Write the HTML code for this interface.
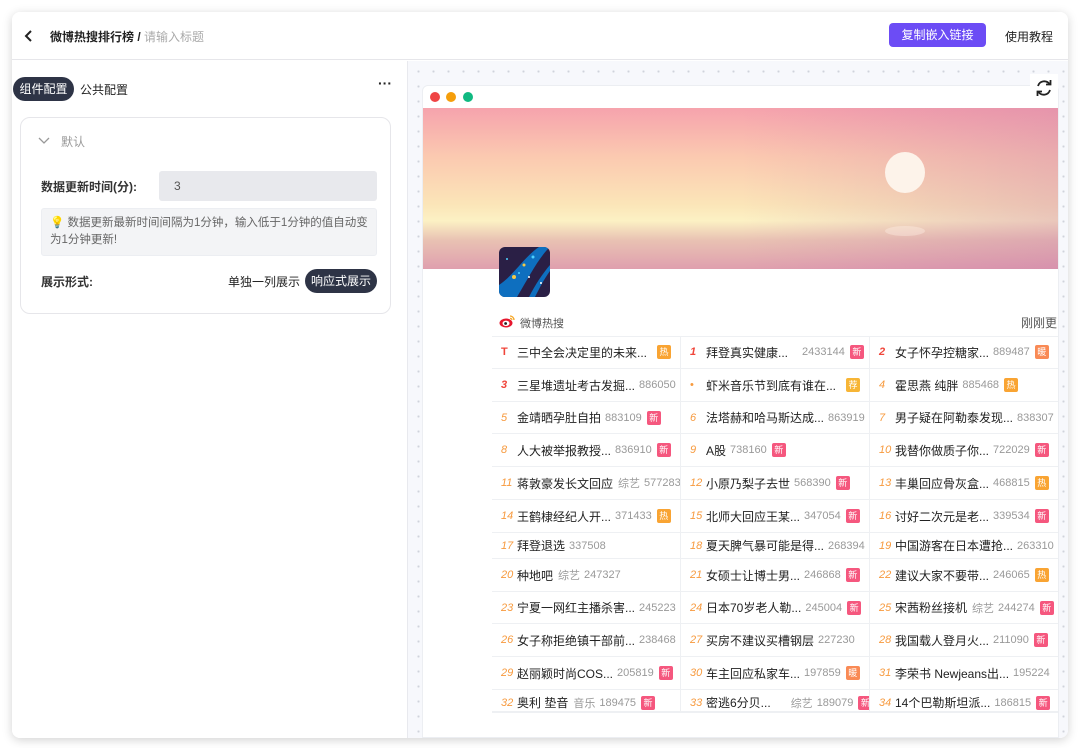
<!DOCTYPE html>
<html><head><meta charset="utf-8">
<style>
*{box-sizing:border-box;margin:0;padding:0}
body{width:1080px;height:748px;background:#fff;font-family:"Liberation Sans","Noto Sans CJK SC",sans-serif;position:relative;overflow:hidden;color:#222}
.card{position:absolute;left:12px;top:12px;width:1056px;height:726px;background:#fff;border-radius:8px;box-shadow:0 2px 10px rgba(0,0,0,.18);overflow:hidden}
.hdr{position:absolute;left:0;top:0;width:1056px;height:48px;border-bottom:1px solid #e6e6ea;background:#fff}
.abs{position:absolute}
.left{position:absolute;left:0;top:49px;width:395px;height:677px;background:#fff}
.right{position:absolute;left:395px;top:49px;width:661px;height:677px;background-color:#f7f8fc;background-image:radial-gradient(#d0d3dc 1px,transparent 1.2px);background-size:15px 15px;background-position:3px 3px;border-left:1px solid #e8e9ee}
.win{position:absolute;left:14px;top:24px;width:637px;height:653px;background:#fff;border-radius:6px 6px 0 0;border:1px solid #eceef2;overflow:hidden}
.banner{position:absolute;left:0;top:22px;width:637px;height:161px;background:linear-gradient(180deg,#f6a3ad 0%,#fbc9b0 30%,#fbe5b8 60%,#fcf1c4 70%,#e9c2b3 82%,#df9fae 100%)}
.banner:after{content:"";position:absolute;inset:0;background:linear-gradient(90deg,rgba(255,255,255,0) 50%,rgba(200,120,170,.35) 100%)}
.row{position:absolute;left:69px;width:568px;display:flex;border-bottom:1px solid #eef0f3}
.c{width:189px;display:flex;align-items:center;padding-left:9px;font-size:12px;white-space:nowrap;overflow:hidden;border-right:1px solid #eef0f3}
.n{width:16px;color:#f79a3e;font-style:italic;font-size:11px;flex:none}
.n.r{color:#f0453a;font-weight:bold}
.t{color:#222}
.k{color:#999;font-size:11px;margin-left:5px}
.g{color:#999;font-size:11px;margin-left:4px}
.b{display:inline-block;width:14px;height:14px;font-size:9px;line-height:14px;text-align:center;color:#fff;border-radius:2px;margin-left:5px;flex:none}
.hot{background:#f9a433}.new{background:#f5577e}.nuan{background:#f98a55}.jian{background:#f7b536}
</style></head><body>
<div class="card">
 <div class="hdr">
  <svg class="abs" style="left:12px;top:17px" width="10" height="14" viewBox="0 0 10 14"><path d="M7 2 L2 7 L7 12" stroke="#222" stroke-width="2" fill="none"/></svg>
  <div class="abs" style="left:38px;top:16px;font-size:12px;font-weight:bold;color:#222">微博热搜排行榜 / <span style="font-weight:normal;color:#aaa">请输入标题</span></div>
  <div class="abs" style="left:877px;top:11px;width:97px;height:24px;background:#6c4cf5;border-radius:4px;color:#fff;font-size:12px;line-height:24px;text-align:center">复制嵌入链接</div>
  <div class="abs" style="left:993px;top:16px;font-size:12px;color:#222">使用教程</div>
 </div>
 <div class="left">
  <div class="abs" style="left:1px;top:16px;width:61px;height:24px;background:#2e3446;border-radius:12px;color:#fff;font-size:12px;line-height:24px;text-align:center">组件配置</div>
  <div class="abs" style="left:68px;top:20px;font-size:12px">公共配置</div>
  <div class="abs" style="left:366px;top:14px;font-size:14px;font-weight:bold">···</div>
  <div class="abs" style="left:8px;top:56px;width:371px;height:197px;border:1px solid #e6e6ea;border-radius:10px">
   <svg class="abs" style="left:17px;top:19px" width="12" height="8" viewBox="0 0 12 8"><path d="M1 1 L6 6 L11 1" stroke="#999" stroke-width="1.3" fill="none"/></svg>
   <div class="abs" style="left:40px;top:15px;font-size:12px;color:#999">默认</div>
   <div class="abs" style="left:20px;top:60px;font-size:12px;font-weight:bold;color:#333">数据更新时间(分):</div>
   <div class="abs" style="left:138px;top:53px;width:218px;height:30px;background:#e8e9ed;border-radius:3px;font-size:12px;color:#555;line-height:30px;padding-left:15px">3</div>
   <div class="abs" style="left:20px;top:90px;width:336px;height:48px;background:#f3f4f6;border:1px solid #eceef2;border-radius:3px;font-size:11.5px;color:#666;padding:6px 8px;line-height:17px"><span style="color:#f6b400">💡</span> 数据更新最新时间间隔为1分钟，输入低于1分钟的值自动变为1分钟更新!</div>
   <div class="abs" style="left:20px;top:155px;font-size:12px;font-weight:bold;color:#333">展示形式:</div>
   <div class="abs" style="left:207px;top:155px;font-size:12px;color:#222">单独一列展示</div>
   <div class="abs" style="left:284px;top:151px;width:72px;height:24px;background:#2e3446;border-radius:12px;color:#fff;font-size:12px;line-height:24px;text-align:center">响应式展示</div>
  </div>
 </div>
 <div class="right">
  <div class="abs" style="left:622px;top:13px;width:28px;height:28px;background:#fff;z-index:3">
   <svg width="28" height="28" viewBox="0 0 28 28"><path d="M8 12 A6.5 6.5 0 0 1 19.5 10 M20 16 A6.5 6.5 0 0 1 8.5 18" stroke="#222" stroke-width="1.8" fill="none"/><path d="M20.5 6 V10.5 H16" stroke="#222" stroke-width="1.8" fill="none"/><path d="M7.5 22 V17.5 H12" stroke="#222" stroke-width="1.8" fill="none"/></svg>
  </div>
  <div class="win">
   <div class="abs" style="left:7px;top:6px;width:10px;height:10px;border-radius:50%;background:#ef4444"></div>
   <div class="abs" style="left:23px;top:6px;width:10px;height:10px;border-radius:50%;background:#f59e0b"></div>
   <div class="abs" style="left:40px;top:6px;width:10px;height:10px;border-radius:50%;background:#10b981"></div>
   <div class="banner"><div class="abs" style="left:462px;top:44px;width:40px;height:41px;border-radius:50%;background:#fdf3ea;z-index:2"></div><div class="abs" style="left:462px;top:118px;width:40px;height:10px;border-radius:50%;background:rgba(255,240,230,.4);z-index:2"></div></div>
   <div class="abs" style="left:76px;top:161px;width:51px;height:50px;border-radius:6px;background:#2a1f45;overflow:hidden">
    <svg width="51" height="50" viewBox="0 0 51 50"><path d="M0 38 C15 28 25 10 40 0 L51 0 C40 10 30 30 18 50 L0 50Z" fill="#0e6fbf"/><path d="M30 50 C36 38 44 26 51 18 L51 24 C45 32 40 42 36 50Z" fill="#0e6fbf"/><circle cx="15" cy="30" r="2" fill="#f6c945"/><circle cx="25" cy="18" r="1.5" fill="#f6c945"/><circle cx="34" cy="10" r="1.5" fill="#4fd1ff"/><circle cx="20" cy="26" r="1" fill="#4fd1ff"/><circle cx="30" cy="30" r="1" fill="#fff"/><circle cx="42" cy="36" r="1" fill="#fff"/><circle cx="8" cy="12" r="1" fill="#4fd1ff"/></svg>
   </div>
   <svg class="abs" style="left:76px;top:228px" width="16" height="14" viewBox="0 0 16 14"><ellipse cx="7" cy="9" rx="6.5" ry="4.5" fill="#e6162d"/><ellipse cx="7" cy="9.3" rx="3.5" ry="2.7" fill="#fff"/><circle cx="6.6" cy="9.5" r="1.4" fill="#222"/><path d="M11 2 A4 4 0 0 1 15 6" stroke="#f5a623" stroke-width="1.3" fill="none"/><path d="M11 4.3 A2 2 0 0 1 13 6" stroke="#f5a623" stroke-width="1.1" fill="none"/></svg>
   <div class="abs" style="left:97px;top:229px;font-size:11px;color:#555">微博热搜</div>
   <div class="abs" style="left:598px;top:228px;font-size:12px;color:#555">刚刚更</div>
   <div class="abs" style="left:69px;top:250px;width:568px;height:377px;border-top:1px solid #eef0f3"></div>

   <div class="row" style="top:250px;height:33px"><div class="c"><span class="n r" style="font-style:normal">T</span><span class="t">三中全会决定里的未来...</span><span class="b hot" style="margin-left:10px">热</span></div><div class="c"><span class="n r">1</span><span class="t">拜登真实健康...</span><span class="g" style="margin-left:14px">2433144</span><span class="b new">新</span></div><div class="c"><span class="n r">2</span><span class="t">女子怀孕控糖家...</span><span class="g">889487</span><span class="b nuan">暖</span></div></div>
   <div class="row" style="top:283px;height:33px"><div class="c"><span class="n r">3</span><span class="t">三星堆遗址考古发掘...</span><span class="g">886050</span></div><div class="c"><span class="n" style="font-style:normal">•</span><span class="t">虾米音乐节到底有谁在...</span><span class="b jian" style="margin-left:10px">荐</span></div><div class="c"><span class="n">4</span><span class="t">霍思燕 纯胖</span><span class="g">885468</span><span class="b hot">热</span></div></div>
   <div class="row" style="top:316px;height:32px"><div class="c"><span class="n">5</span><span class="t">金靖晒孕肚自拍</span><span class="g">883109</span><span class="b new">新</span></div><div class="c"><span class="n">6</span><span class="t">法塔赫和哈马斯达成...</span><span class="g">863919</span></div><div class="c"><span class="n">7</span><span class="t">男子疑在阿勒泰发现...</span><span class="g">838307</span></div></div>
   <div class="row" style="top:348px;height:33px"><div class="c"><span class="n">8</span><span class="t">人大被举报教授...</span><span class="g">836910</span><span class="b new">新</span></div><div class="c"><span class="n">9</span><span class="t">A股</span><span class="g">738160</span><span class="b new">新</span></div><div class="c"><span class="n">10</span><span class="t">我替你做质子你...</span><span class="g">722029</span><span class="b new">新</span></div></div>
   <div class="row" style="top:381px;height:33px"><div class="c"><span class="n">11</span><span class="t">蒋敦豪发长文回应</span><span class="k">综艺</span><span class="g">577283</span></div><div class="c"><span class="n">12</span><span class="t">小原乃梨子去世</span><span class="g">568390</span><span class="b new">新</span></div><div class="c"><span class="n">13</span><span class="t">丰巢回应骨灰盒...</span><span class="g">468815</span><span class="b hot">热</span></div></div>
   <div class="row" style="top:414px;height:33px"><div class="c"><span class="n">14</span><span class="t">王鹤棣经纪人开...</span><span class="g">371433</span><span class="b hot">热</span></div><div class="c"><span class="n">15</span><span class="t">北师大回应王某...</span><span class="g">347054</span><span class="b new">新</span></div><div class="c"><span class="n">16</span><span class="t">讨好二次元是老...</span><span class="g">339534</span><span class="b new">新</span></div></div>
   <div class="row" style="top:447px;height:26px"><div class="c"><span class="n">17</span><span class="t">拜登退选</span><span class="g">337508</span></div><div class="c"><span class="n">18</span><span class="t">夏天脾气暴可能是得...</span><span class="g">268394</span></div><div class="c"><span class="n">19</span><span class="t">中国游客在日本遭抢...</span><span class="g">263310</span></div></div>
   <div class="row" style="top:473px;height:33px"><div class="c"><span class="n">20</span><span class="t">种地吧</span><span class="k">综艺</span><span class="g">247327</span></div><div class="c"><span class="n">21</span><span class="t">女硕士让博士男...</span><span class="g">246868</span><span class="b new">新</span></div><div class="c"><span class="n">22</span><span class="t">建议大家不要带...</span><span class="g">246065</span><span class="b hot">热</span></div></div>
   <div class="row" style="top:506px;height:32px"><div class="c"><span class="n">23</span><span class="t">宁夏一网红主播杀害...</span><span class="g">245223</span></div><div class="c"><span class="n">24</span><span class="t">日本70岁老人勒...</span><span class="g">245004</span><span class="b new">新</span></div><div class="c"><span class="n">25</span><span class="t">宋茜粉丝接机</span><span class="k">综艺</span><span class="g">244274</span><span class="b new">新</span></div></div>
   <div class="row" style="top:538px;height:33px"><div class="c"><span class="n">26</span><span class="t">女子称拒绝镇干部前...</span><span class="g">238468</span></div><div class="c"><span class="n">27</span><span class="t">买房不建议买槽钢层</span><span class="g">227230</span></div><div class="c"><span class="n">28</span><span class="t">我国载人登月火...</span><span class="g">211090</span><span class="b new">新</span></div></div>
   <div class="row" style="top:571px;height:33px"><div class="c"><span class="n">29</span><span class="t">赵丽颖时尚COS...</span><span class="g">205819</span><span class="b new">新</span></div><div class="c"><span class="n">30</span><span class="t">车主回应私家车...</span><span class="g">197859</span><span class="b nuan">暖</span></div><div class="c"><span class="n">31</span><span class="t">李荣书 Newjeans出...</span><span class="g">195224</span></div></div>
   <div class="row" style="top:604px;height:23px;align-items:flex-end;overflow:hidden;border-bottom:2px solid #eef0f3"><div class="c" style="height:23px;align-items:center;padding-top:6px"><span class="n">32</span><span class="t">奥利 垫音</span><span class="k">音乐</span><span class="g">189475</span><span class="b new">新</span></div><div class="c" style="height:23px;padding-top:6px"><span class="n">33</span><span class="t">密逃6分贝...</span><span class="k" style="margin-left:20px">综艺</span><span class="g">189079</span><span class="b new">新</span></div><div class="c" style="height:23px;padding-top:6px"><span class="n">34</span><span class="t">14个巴勒斯坦派...</span><span class="g">186815</span><span class="b new">新</span></div></div>
  </div>
 </div>
</div>
</body></html>
